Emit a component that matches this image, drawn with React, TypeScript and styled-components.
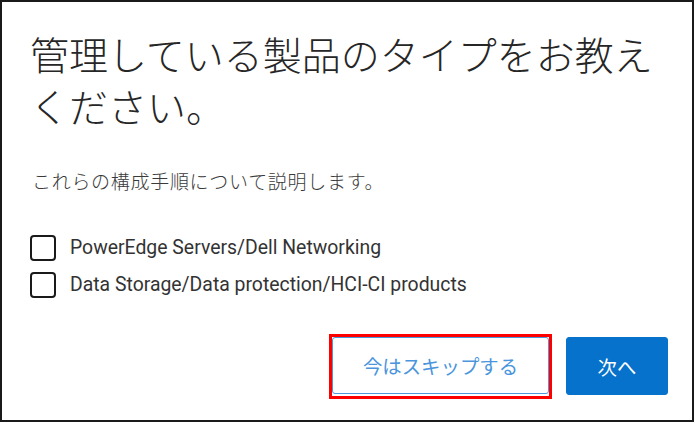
import styled, { createGlobalStyle } from 'styled-components'

const GlobalStyle = createGlobalStyle`
    html, body {
        margin: 0;
        padding: 0;
        background: #ffffff;
    }
`

const Frame = styled.div`
    box-sizing: border-box;
    width: 694px;
    height: 422px;
    border: 2px solid #1a1a1a;
    background: #ffffff;
    padding: 25px 24px 0 28px;
    display: flex;
    flex-direction: column;
`

const Heading = styled.h1`
    margin: 0;
    padding-right: 4px;
    font-family: "Noto Sans CJK JP", "Noto Sans", sans-serif;
    font-weight: 300;
    font-size: 39px;
    line-height: 52px;
    color: #262626;
`

const Lead = styled.p`
    margin: 38px 0 0 2px;
    font-family: "Noto Sans CJK JP", "Noto Sans", sans-serif;
    font-size: 19px;
    letter-spacing: 0.7px;
    font-weight: 300;
    line-height: 24px;
    color: #3a3a3a;
`

const OptionList = styled.div`
    margin-top: 42px;
    display: flex;
    flex-direction: column;
    gap: 11px;
`

const Option = styled.label`
    display: flex;
    align-items: center;
    gap: 14px;
    font-family: Roboto, "Noto Sans CJK JP", sans-serif;
    font-size: 19.4px;
    line-height: 26px;
    color: #333333;
`

const Box = styled.span`
    box-sizing: border-box;
    width: 26px;
    height: 26px;
    border: 2px solid #1a1a1a;
    border-radius: 4px;
    flex-shrink: 0;
`

const Actions = styled.div`
    margin-top: auto;
    margin-bottom: 21px;
    display: flex;
    align-items: flex-start;
    justify-content: flex-end;
    gap: 14px;
`

const Highlight = styled.span`
    display: inline-flex;
    border: 3px solid #ff0000;
    padding: 0 0 2px;
`

const Button = styled.button<{ $primary?: boolean }>`
    box-sizing: border-box;
    height: ${p => (p.$primary ? '58px' : '57px')};
    margin-top: ${p => (p.$primary ? '3px' : '0')};
    width: ${p => (p.$primary ? '102px' : '217px')};
    padding: 0;
    border-radius: 3px;
    font-family: "Noto Sans CJK JP", sans-serif;
    font-size: 19.4px;
    cursor: pointer;
    border: 1px solid ${p => (p.$primary ? '#0672cb' : '#4d97dc')};
    background: ${p => (p.$primary ? '#0672cb' : '#ffffff')};
    color: ${p => (p.$primary ? '#ffffff' : '#4a95dc')};
`

const App = function() {
    return (
        <>
            <GlobalStyle />
            <Frame>
                <Heading>管理している製品のタイプをお教えください。</Heading>
                <Lead>これらの構成手順について説明します。</Lead>
                <OptionList>
                    <Option>
                        <Box />
                        PowerEdge Servers/Dell Networking
                    </Option>
                    <Option>
                        <Box />
                        Data Storage/Data protection/HCI-CI products
                    </Option>
                </OptionList>
                <Actions>
                    <Highlight>
                        <Button>今はスキップする</Button>
                    </Highlight>
                    <Button $primary>次へ</Button>
                </Actions>
            </Frame>
        </>
    )
}

export default App
